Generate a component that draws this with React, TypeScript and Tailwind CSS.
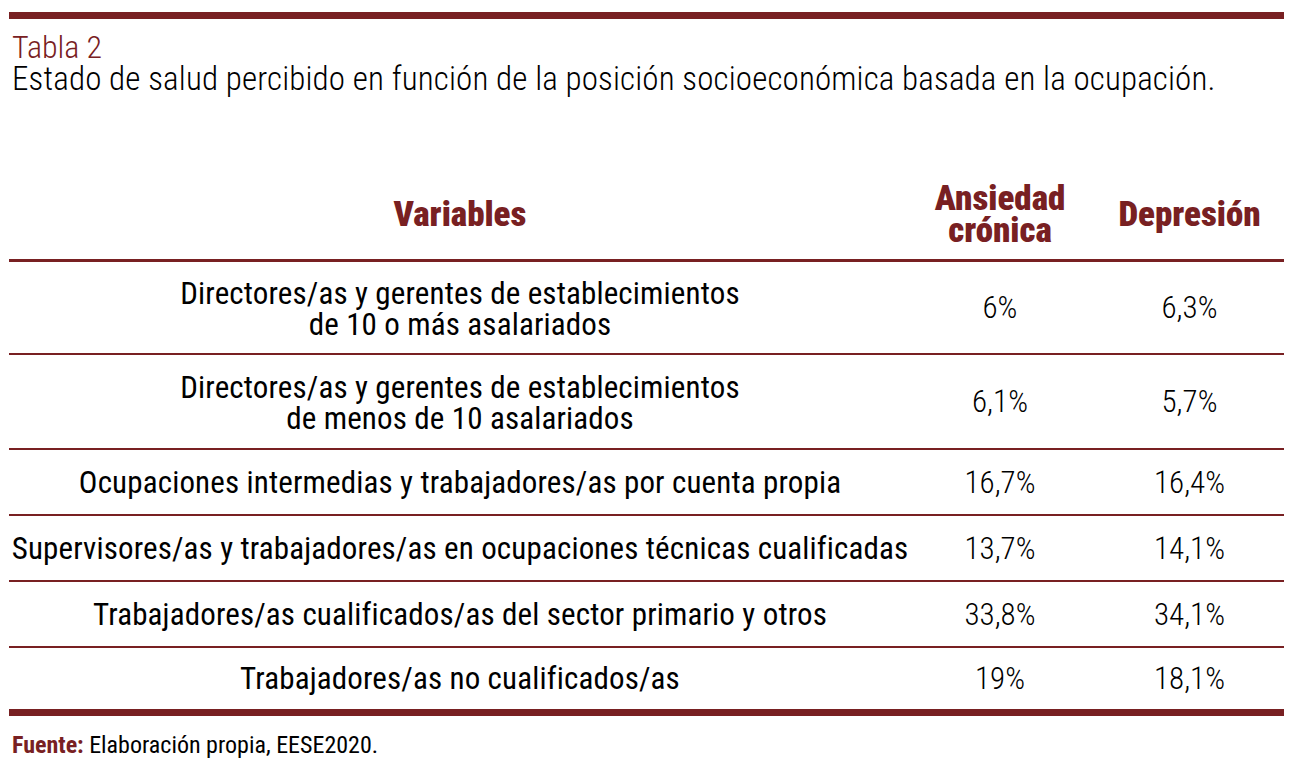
const rows = [
  {
    label: ["Directores/as y gerentes de establecimientos", "de 10 o más asalariados"],
    a: "6%",
    d: "6,3%",
    h: "h-[93px]",
  },
  {
    label: ["Directores/as y gerentes de establecimientos", "de menos de 10 asalariados"],
    a: "6,1%",
    d: "5,7%",
    h: "h-[95px]",
  },
  { label: ["Ocupaciones intermedias y trabajadores/as por cuenta propia"], a: "16,7%", d: "16,4%", h: "h-[66px]" },
  {
    label: ["Supervisores/as y trabajadores/as en ocupaciones técnicas cualificadas"],
    a: "13,7%",
    d: "14,1%",
    h: "h-[66px]",
  },
  {
    label: ["Trabajadores/as cualificados/as del sector primario y otros"],
    a: "33,8%",
    d: "34,1%",
    h: "h-[66px]",
  },
  { label: ["Trabajadores/as no cualificados/as"], a: "19%", d: "18,1%", h: "h-[61px]" },
];

export default function App() {
  return (
    <div className="min-h-screen bg-white pl-[9px] pr-[12px] pt-[12px] font-['Roboto_Condensed',sans-serif] text-black">
      <div className="h-[7px] bg-[#782022]" />

      <div className="mt-[12px] pl-[3px] font-light leading-8">
        <div className="text-[32px] text-[#782022]">Tabla 2</div>
        <div className="text-[33px] tracking-[0.15px]">
          Estado de salud percibido en función de la posición socioeconómica basada en la ocupación.
        </div>
      </div>

      <div className="mt-[75px]">
        <div className="grid h-[92px] grid-cols-[902px_178px_1fr] items-center border-b-[3px] border-[#782022] text-center text-[35px] font-black leading-[32px] text-[#782022]">
          <div>Variables</div>
          <div>
            Ansiedad
            <br />
            crónica
          </div>
          <div className="pl-[6px]">Depresión</div>
        </div>

        {rows.map((r, i) => (
          <div
            key={i}
            className={`grid grid-cols-[902px_178px_1fr] items-center text-center text-[31px] leading-[31px] ${r.h} ${
              i < rows.length - 1 ? "border-b-2 border-[#782022]" : ""
            }`}
          >
            <div className={`font-normal tracking-[0.15px] ${r.label.length > 1 ? "pt-[3px]" : ""}`}>
              {r.label.map((l) => (
                <div key={l}>{l}</div>
              ))}
            </div>
            <div className="font-light">{r.a}</div>
            <div className="pl-[6px] font-light">{r.d}</div>
          </div>
        ))}

        <div className="h-[7px] bg-[#782022]" />
      </div>

      <div className="mt-[17px] pl-[3px] text-[24px] font-normal leading-6">
        <span className="font-bold text-[#782022]">Fuente:</span> Elaboración propia, EESE2020.
      </div>
    </div>
  );
}
